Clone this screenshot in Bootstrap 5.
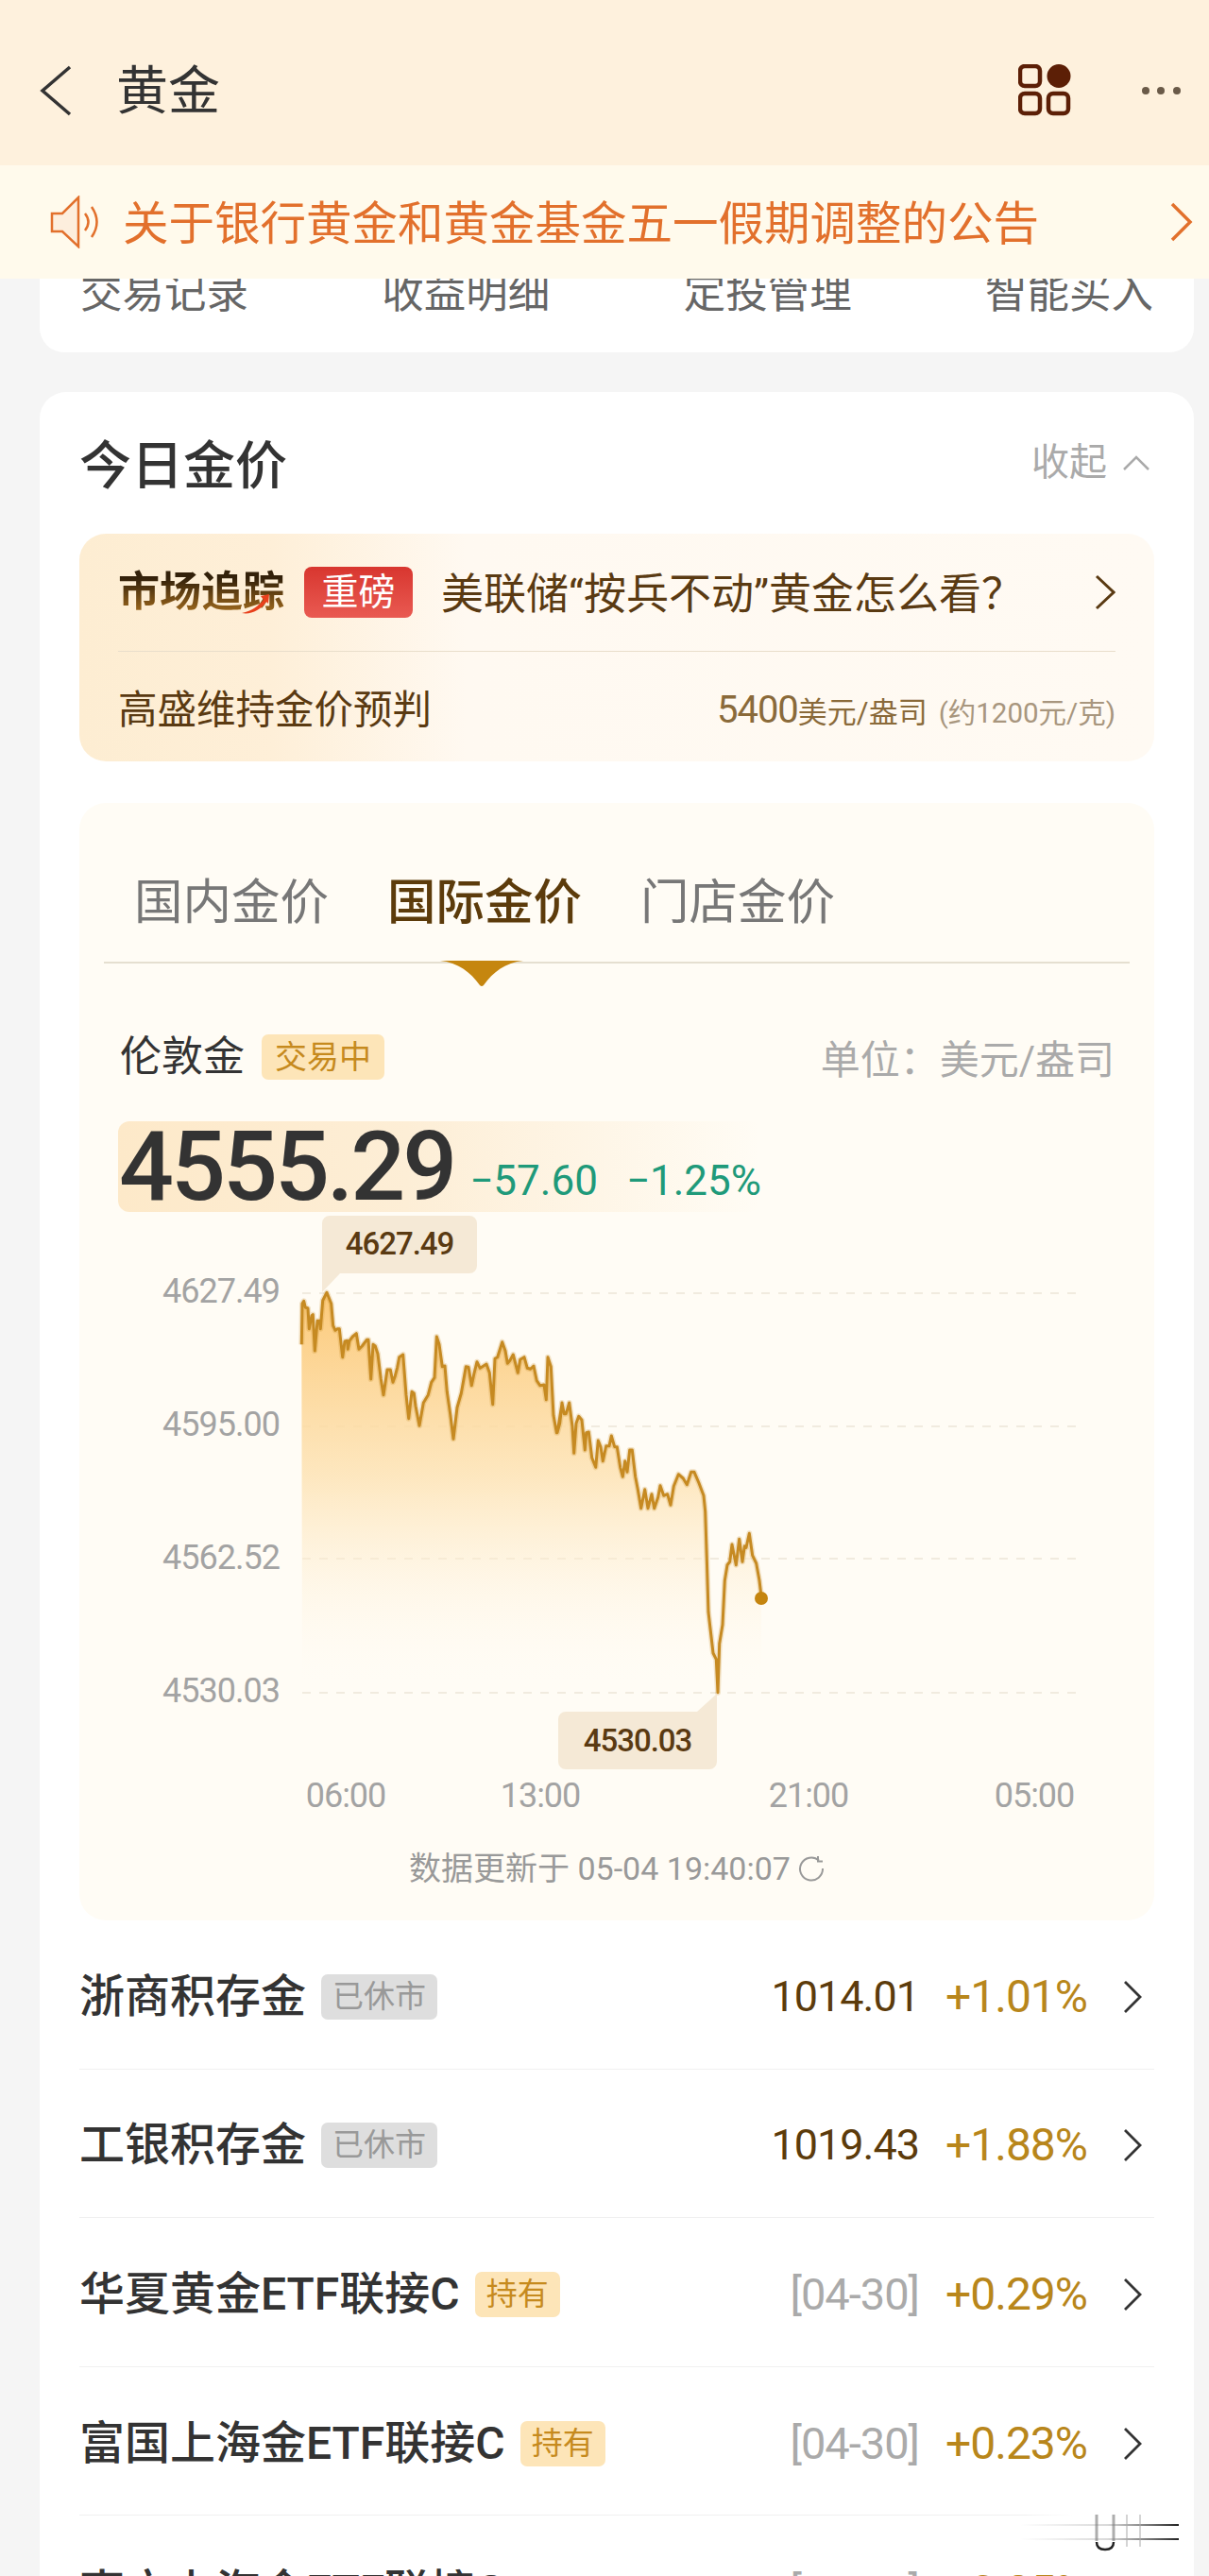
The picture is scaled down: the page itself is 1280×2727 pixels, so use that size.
<!DOCTYPE html>
<html lang="zh-CN">
<head>
    <meta charset="UTF-8">
    <meta name="viewport" content="width=device-width, initial-scale=1.0">
    <title>黄金</title>
    <link href="https://cdn.jsdelivr.net/npm/bootstrap@5.3.0/dist/css/bootstrap.min.css" rel="stylesheet">
    <style>
        html, body {
            height: 2727px;
            overflow: hidden;
        }
        body {
            background-color: #f5f5f5;
            font-family: Roboto, "Noto Sans CJK SC", sans-serif;
            color: #333;
        }
        .top-head {
            height: 175px;
            padding: 16px 30px 0 42px;
            background-color: #fef1dd;
        }
        .top-title {
            font-size: 55px;
            line-height: 60px;
            margin-left: 47px;
        }
        .apps-icon {
            margin-right: 74px;
        }
        .notice-bar {
            height: 120px;
            padding: 0 17px 0 53px;
            background-color: #fffaec;
            color: #e2702c;
            font-size: 48.5px;
            line-height: 60px;
        }
        .notice-bar span {
            margin: 5px 0 0 21px;
        }
        .scroll-card {
            height: 78px;
            margin: 0 16px 0 42px;
            padding: 0 43px;
            overflow: hidden;
            background-color: #fff;
            border-radius: 0 0 26px 26px;
        }
        .scroll-card span {
            margin-top: -9px;
            font-size: 44.5px;
            line-height: 50px;
            color: #666;
        }
        .gold-card {
            margin: 42px 16px 0 42px;
            padding: 0 42px;
            background-color: #fff;
            border-radius: 28px 28px 0 0;
        }
        .gold-head {
            height: 150px;
        }
        .gold-title {
            margin-top: 5px;
            font-size: 55px;
            font-weight: 500;
            line-height: 60px;
        }
        .fold-link {
            font-size: 40px;
            color: #aaa;
        }
        .market-box {
            height: 241px;
            padding: 0 41px;
            border-radius: 28px;
            background: linear-gradient(90deg, #fdedd2 0%, #feefd8 18%, #fff9f1 36%, #fffaf3 100%);
            color: #5a3a12;
        }
        .market-top {
            height: 125px;
            border-bottom: 1px solid #e9decb;
        }
        .market-logo {
            position: relative;
            width: 177px;
            font-size: 44px;
            font-weight: 700;
            line-height: 50px;
            white-space: nowrap;
            background: linear-gradient(180deg, #33210a 20%, #a9701f 100%);
            -webkit-background-clip: text;
            background-clip: text;
            color: transparent;
        }
        .market-swoosh {
            position: absolute;
            left: 130px;
            top: 26px;
        }
        .market-tag {
            width: 115px;
            height: 54px;
            margin: 0 30px 0 20px;
            border-radius: 8px;
            background: linear-gradient(180deg, #d8362f, #e95a52);
            color: #fff;
            font-size: 39px;
            line-height: 54px;
            text-align: center;
        }
        .market-news {
            margin-top: 5px;
            font-size: 45px;
            line-height: 50px;
        }
        .market-bottom {
            height: 115px;
            padding-top: 8px;
        }
        .market-bottom .forecast {
            font-size: 41.5px;
            line-height: 50px;
        }
        .market-val {
            color: #8a6a3a;
            font-size: 31px;
        }
        .market-val b {
            font-size: 40px;
            font-weight: 400;
            letter-spacing: -1px;
        }
        .market-val i {
            font-style: normal;
            font-size: 29.5px;
            margin-left: 12px;
            color: #a8967e;
        }
        .price-panel {
            margin-top: 44px;
            border-radius: 28px;
            background-color: #fffcf5;
        }
        .tab-row {
            height: 170px;
            margin: 0 26px;
            padding: 0 32px 35px;
            gap: 62px;
            border-bottom: 2px solid #e5dfd0;
        }
        .tab-item {
            position: relative;
            font-size: 51.5px;
            line-height: 54px;
            color: #777;
        }
        .tab-item.is-on {
            color: #5c3b0b;
            font-weight: 500;
        }
        .tab-tip {
            position: absolute;
            left: 55px;
            top: 87px;
        }
        .info-row {
            height: 48px;
            margin: 75px 42px 0 43px;
        }
        .info-name {
            font-size: 44px;
            line-height: 48px;
        }
        .state-tag {
            height: 48px;
            margin-left: 18px;
            padding: 0 14px;
            border-radius: 7px;
            font-size: 34px;
            line-height: 48px;
        }
        .state-gold {
            background-color: #fde5b8;
            color: #c68a1e;
        }
        .state-gray {
            background-color: #dedede;
            color: #999;
        }
        .info-unit {
            margin-top: 8px;
            font-size: 42px;
            line-height: 48px;
            color: #aaa;
        }
        .price-strip {
            width: 680px;
            height: 96px;
            margin: 44px 0 0 41px;
            padding-left: 1px;
            border-radius: 12px;
            background: linear-gradient(90deg, #fde9c9 0%, #fdeed6 45%, #fffcf5 100%);
        }
        .price-now {
            font-size: 102px;
            font-weight: 500;
            line-height: 96px;
            letter-spacing: -3px;
        }
        .price-diff {
            margin-left: 16px;
            padding-top: 38px;
            font-size: 44px;
            line-height: 50px;
            color: #1f9a7a;
        }
        .price-diff span + span {
            margin-left: 30px;
        }
        .chart-svg {
            display: block;
        }
        .chart-svg text {
            font-family: Roboto, sans-serif;
        }
        .axis-txt {
            font-size: 36px;
            letter-spacing: -1px;
            fill: #a3a3a3;
        }
        .tip-txt {
            font-size: 33px;
            font-weight: 500;
            letter-spacing: -1px;
            fill: #5a3a12;
        }
        .update-line {
            height: 110px;
            gap: 8px;
            font-size: 34px;
            color: #999;
        }
        .fund-row {
            height: 157.6px;
            padding-top: 5px;
            border-bottom: 1px solid #f0f0f0;
        }
        .fund-name {
            font-size: 48px;
            font-weight: 500;
            line-height: 56px;
        }
        .fund-row .state-tag {
            margin-left: 16px;
            padding: 0 12px;
            font-size: 33px;
        }
        .fund-nums {
            margin-left: auto;
            line-height: 56px;
            letter-spacing: -1px;
        }
        .fund-price {
            font-size: 45px;
            color: #5c3b0b;
        }
        .fund-date {
            font-size: 47px;
            color: #aaa;
        }
        .fund-change {
            margin-left: 28px;
            font-size: 48px;
            color: #b8861b;
        }
        .fund-go {
            margin: 0 13px 0 38px;
        }
        .corner-mark {
            position: absolute;
            left: 1080px;
            top: 2650px;
        }
    </style>
</head>
<body class="position-relative">
    <header class="top-head d-flex align-items-center">
        <svg width="34" height="54" viewBox="0 0 34 54" fill="none" stroke="#333" stroke-width="3.5"><path d="M32 2 3 27l29 25"/></svg>
        <div class="top-title">黄金</div>
        <svg class="apps-icon ms-auto" width="56" height="56" viewBox="0 0 56 56" fill="none" stroke="#5c1f06" stroke-width="4.5">
            <rect x="2" y="2" width="21" height="21" rx="5"/>
            <circle cx="43" cy="12.500" r="12.500" fill="#5c1f06" stroke="none"/>
            <rect x="2" y="31" width="21" height="21" rx="5"/>
            <rect x="32" y="31" width="21" height="21" rx="5"/>
        </svg>
        <svg width="42" height="10" viewBox="0 0 42 10" fill="#6a5a48">
            <circle cx="5" cy="5" r="4"/><circle cx="21" cy="5" r="4"/><circle cx="38" cy="5" r="4"/>
        </svg>
    </header>

    <div class="notice-bar d-flex align-items-center">
        <svg width="56" height="56" viewBox="0 0 56 56" fill="#fdeedd" stroke="#e2702c" stroke-width="2.500">
            <path d="M2 19H13L30 2V54L13 38H2Z"/>
            <path d="M37 19Q44 28 37 37M44 12Q55 28 44 44" fill="none"/>
        </svg>
        <span>关于银行黄金和黄金基金五一假期调整的公告</span>
        <svg class="ms-auto" width="24" height="42" viewBox="0 0 24 42" fill="none" stroke="#e2702c" stroke-width="3.5"><path d="M2 2 21 21 2 40"/></svg>
    </div>

    <div class="scroll-card d-flex justify-content-between">
        <span>交易记录</span><span>收益明细</span><span>定投管理</span><span>智能买入</span>
    </div>

    <main class="gold-card">
        <div class="gold-head d-flex align-items-center justify-content-between">
            <div class="gold-title">今日金价</div>
            <div class="fold-link d-flex align-items-center">
                收起
                <svg class="ms-3 me-1" width="30" height="18" viewBox="0 0 30 18" fill="none" stroke="#aaa" stroke-width="2.500"><path d="M2 16 15 3l13 13"/></svg>
            </div>
        </div>

        <section class="market-box">
            <div class="market-top d-flex align-items-center">
                <div class="market-logo">市场追踪
                    <svg class="market-swoosh" width="30" height="22" viewBox="0 0 30 22"><path d="M1 21C12 19 19 13 24 7L21 3 30 1 29 11 27 9C21 18 10 23 1 21Z" fill="#e8401c"/></svg>
                </div>
                <div class="market-tag">重磅</div>
                <div class="market-news">美联储“按兵不动”黄金怎么看？</div>
                <svg class="ms-auto" width="22" height="38" viewBox="0 0 22 38" fill="none" stroke="#5a3a12" stroke-width="3"><path d="M2 2 20 19 2 36"/></svg>
            </div>
            <div class="market-bottom d-flex align-items-center justify-content-between">
                <div class="forecast">高盛维持金价预判</div>
                <div class="market-val"><b>5400</b>美元/盎司<i>(约1200元/克)</i></div>
            </div>
        </section>

        <section class="price-panel">
            <div class="tab-row d-flex align-items-end">
                <div class="tab-item">国内金价</div>
                <div class="tab-item is-on">国际金价
                    <svg class="tab-tip" width="90" height="30" viewBox="0 0 90 30"><path d="M1 1H89C70 3 57 13 47 27Q45 29 43 27C33 13 20 3 1 1Z" fill="#c5860f"/></svg>
                </div>
                <div class="tab-item">门店金价</div>
            </div>

            <div class="info-row d-flex align-items-center">
                <div class="info-name">伦敦金</div>
                <div class="state-tag state-gold">交易中</div>
                <div class="info-unit ms-auto">单位：美元/盎司</div>
            </div>

            <div class="price-strip d-flex">
                <div class="price-now">4555.29</div>
                <div class="price-diff text-nowrap"><span>−57.60</span><span>−1.25%</span></div>
            </div>

            <svg class="chart-svg" width="1138" height="640" viewBox="84 1283 1138 640">
                <defs>
                    <linearGradient id="areaFill" gradientUnits="userSpaceOnUse" x1="0" y1="1380" x2="0" y2="1790">
                        <stop offset="0" stop-color="#fcc978" stop-opacity=".95"/>
                        <stop offset=".45" stop-color="#fde2b2" stop-opacity=".8"/>
                        <stop offset="1" stop-color="#fffcf5" stop-opacity="0"/>
                    </linearGradient>
                </defs>
                <g stroke="#f1ebdf" stroke-width="2" stroke-dasharray="9 9">
                    <path d="M320 1369H1140"/><path d="M320 1510H1140"/><path d="M320 1650H1140"/><path d="M320 1792H1140"/>
                </g>
                <path id="chartArea" fill="url(#areaFill)"/>
                <path id="chartHalo" fill="none" stroke="#c68a22" stroke-width="6" stroke-linejoin="round" opacity=".22"/>
                <path id="chartLine" fill="none" stroke="#c68a22" stroke-width="3" stroke-linejoin="round"/>
                <circle cx="806" cy="1692" r="7" fill="#c5850f"/>

                <g text-anchor="end" class="axis-txt">
                    <text x="296" y="1379">4627.49</text>
                    <text x="296" y="1520">4595.00</text>
                    <text x="296" y="1661">4562.52</text>
                    <text x="296" y="1802">4530.03</text>
                </g>
                <g text-anchor="middle" class="axis-txt">
                    <text x="366" y="1913">06:00</text>
                    <text x="572" y="1913">13:00</text>
                    <text x="856" y="1913">21:00</text>
                    <text x="1095" y="1913">05:00</text>
                </g>

                <path d="M349 1287a8 8 0 0 0-8 8V1368L360 1348H497a8 8 0 0 0 8-8V1295a8 8 0 0 0-8-8H349Z" fill="#f5e9d6"/>
                <text x="423" y="1328" text-anchor="middle" class="tip-txt">4627.49</text>
                <path d="M599 1812H738L759 1793V1865a8 8 0 0 1-8 8H599a8 8 0 0 1-8-8V1820a8 8 0 0 1 8-8Z" fill="#f5e9d6"/>
                <text x="675" y="1854" text-anchor="middle" class="tip-txt">4530.03</text>
            </svg>

            <div class="update-line d-flex align-items-center justify-content-center">
                <span>数据更新于 05-04 19:40:07</span>
                <svg width="28" height="28" viewBox="0 0 28 28" fill="none" stroke="#999" stroke-width="2"><path d="M22 5.500A12 12 0 1 0 26 14M21 1V6.500H26"/></svg>
            </div>
        </section>

        <div id="fundList"></div>
    </main>

    <svg class="corner-mark" width="184" height="60" viewBox="0 0 184 60" fill="none">
        <defs>
            <linearGradient id="markFade" gradientUnits="userSpaceOnUse" x1="0" y1="0" x2="168" y2="0">
                <stop offset="0" stop-color="#444" stop-opacity="0"/>
                <stop offset=".55" stop-color="#444" stop-opacity=".2"/>
                <stop offset="1" stop-color="#222"/>
            </linearGradient>
            <linearGradient id="markWash" x1="0" y1="0" x2="1" y2="0">
                <stop offset="0" stop-color="#fff" stop-opacity="0"/>
                <stop offset=".3" stop-color="#fff"/>
            </linearGradient>
        </defs>
        <rect width="184" height="40" fill="url(#markWash)"/>
        <path d="M0 23H168M0 38H168" stroke="url(#markFade)" stroke-width="2"/>
        <path d="M81 12V40" stroke="#777" stroke-width="3" opacity=".6"/>
        <path d="M99 12V40" stroke="#777" stroke-width="3" opacity=".6"/>
        <path d="M81 41Q81 49 90 49Q99 49 99 41" stroke="#222" stroke-width="2.500"/>
        <path d="M113 12V46M127 12V46" stroke="#aaa" stroke-width="2" opacity=".5"/>
    </svg>

    <script src="https://cdn.jsdelivr.net/npm/bootstrap@5.3.0/dist/js/bootstrap.bundle.min.js"></script>
    <script>
        // Price line, traced in three pieces from 3x crops of the chart
        const pieces = [
            { x: 300, y: 1360, pts: [58,190,60,60,65,52,70,72,78,75,82,140,90,98,94,95,100,210,108,115,115,115,118,140,125,50,138,25,152,60,158,130,165,145,172,140,178,140,188,230,195,180,203,178,205,205,210,178,220,165,232,155,240,205,250,195,265,175,270,175,278,300,285,190,292,195,300,220,310,300,318,350,330,270,340,270,348,310,355,290,362,262,368,230,380,222,390,350,398,425,408,340,415,345,420,385,432,448,445,375,460,350,470,310,480,295,487,165,495,190,505,260,513,258,520,340,530,410,540,490,552,390,565,345,580,260,588,262,598,320,605,285,615,245,625,265,645,252,655,280,665,380,672,235,680,230,695,182,705,210,712,250,720,240,730,222,745,280,752,238,765,230,775,265,785,268,795,258,805,305,815,320,828,318,835,365,840,230,850,260,858,415,868,470,878,440,885,378] },
            { x: 590, y: 1440, pts: [0,230,8,200,15,135,22,170,28,170,38,135,48,210,53,295,60,200,68,178,78,190,88,285,92,230,100,228,110,310,122,340,130,255,138,275,145,320,155,272,165,272,172,240,182,275,190,275,200,340,208,370,215,320,222,355,230,285,238,285,248,370,256,410,266,470,278,410,288,470,300,425,308,470,320,435,327,398,338,430,350,425,360,460,370,400,385,362,400,375,412,395,425,355,435,355,450,390,465,430,470,480] },
            { x: 680, y: 1540, pts: [205,330,210,500,218,570,225,630,235,650,240,755,245,600,255,540,262,400,270,350,278,340,285,285,298,350,308,268,318,340,325,290,330,295,340,250,350,320,362,345,372,400,378,450] }
        ];
        const line = [];
        pieces.forEach(p => {
            for (let i = 0; i < p.pts.length; i += 2) {
                line.push((p.x + p.pts[i] / 3).toFixed(1) + ' ' + (p.y + p.pts[i + 1] / 3).toFixed(1));
            }
        });
        document.getElementById('chartLine').setAttribute('d', 'M' + line.join('L'));
        document.getElementById('chartHalo').setAttribute('d', 'M' + line.join('L'));
        document.getElementById('chartArea').setAttribute('d', 'M320 1800L' + line.join('L') + 'L806 1800Z');

        // Fund rows
        const funds = [
            { name: '浙商积存金', tag: '已休市', tagClass: 'state-gray', value: '1014.01', valueClass: 'fund-price', change: '+1.01%' },
            { name: '工银积存金', tag: '已休市', tagClass: 'state-gray', value: '1019.43', valueClass: 'fund-price', change: '+1.88%' },
            { name: '华夏黄金ETF联接C', tag: '持有', tagClass: 'state-gold', value: '[04-30]', valueClass: 'fund-date', change: '+0.29%' },
            { name: '富国上海金ETF联接C', tag: '持有', tagClass: 'state-gold', value: '[04-30]', valueClass: 'fund-date', change: '+0.23%' },
            { name: '南方上海金ETF联接C', tag: '', tagClass: '', value: '[04-30]', valueClass: 'fund-date', change: '+0.25%' }
        ];
        document.getElementById('fundList').innerHTML = funds.map(fund => `
            <div class="fund-row d-flex align-items-center">
                <div class="fund-name">${fund.name}</div>
                ${fund.tag ? `<div class="state-tag ${fund.tagClass}">${fund.tag}</div>` : ''}
                <div class="fund-nums d-flex"><span class="${fund.valueClass}">${fund.value}</span><span class="fund-change">${fund.change}</span></div>
                <svg class="fund-go" width="20" height="36" viewBox="0 0 20 36" fill="none" stroke="#333" stroke-width="2.800"><path d="M2 2 18 18 2 34"/></svg>
            </div>
        `).join('');
    </script>
</body>
</html>
